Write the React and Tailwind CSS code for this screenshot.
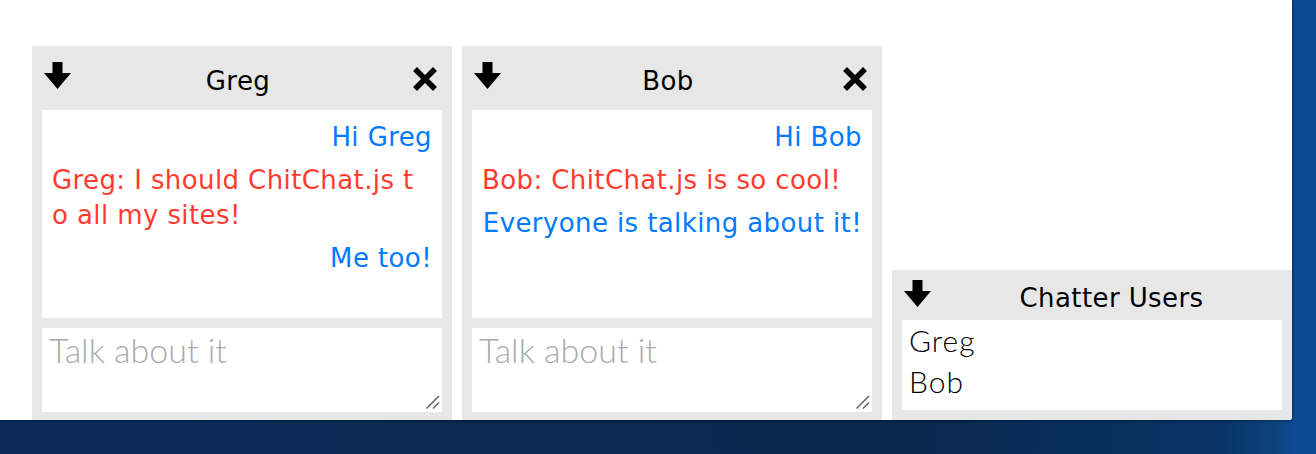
import React from "react";

const sans = { fontFamily: '"DejaVu Sans", Verdana, sans-serif' };
const thin = { fontFamily: 'Lato, "Open Sans", sans-serif' };

function DownArrow() {
  return (
    <svg width="27" height="27" viewBox="0 0 27 27" className="block shrink-0">
      <polygon points="8.5,0 18.5,0 18.5,11 27,11 13.5,27 0,11 8.5,11" fill="#000" />
    </svg>
  );
}

function CloseX() {
  return (
    <svg width="24" height="24" viewBox="0 0 24 24" className="block shrink-0">
      <path d="M4 4 L20 20 M20 4 L4 20" stroke="#000" strokeWidth="5.5" strokeLinecap="square" fill="none" />
    </svg>
  );
}

function Grip() {
  return (
    <svg width="16" height="16" viewBox="0 0 16 16" className="absolute right-[1px] bottom-[2px] pointer-events-none">
      <path d="M1.5 14.5 L14 2 M8 14.5 L14 8.5" stroke="#6b6b6b" strokeWidth="1.6" fill="none" />
    </svg>
  );
}

function ChatPanel({ name, messages }) {
  return (
    <div className="w-[420px] h-[374px] bg-[#e7e7e7] flex flex-col shrink-0">
      <div className="h-[64px] flex items-start pl-[12px] pr-[15px] shrink-0">
        <div className="mt-[16px]">
          <DownArrow />
        </div>
        <div
          className="flex-1 text-center text-[26px] leading-[30px] mt-[20px] pr-[8px] tracking-[0.4px] text-black"
          style={sans}
        >
          {name}
        </div>
        <div className="mt-[21px]">
          <CloseX />
        </div>
      </div>
      <div
        className="mx-[10px] h-[208px] bg-white px-[10px] pt-[10px] flex flex-col gap-[8px] shrink-0 tracking-[0.4px]"
        style={sans}
      >
        {messages.map((m, i) => (
          <div
            key={i}
            className={
              "text-[26px] leading-[35px] break-all " +
              (m.mine ? "text-right text-[#007aff]" : "text-left text-[#ff3b30] max-w-[368px]")
            }
          >
            {m.text}
          </div>
        ))}
      </div>
      <div className="relative mx-[10px] mt-[10px] h-[84px] bg-white shrink-0 flex">
        <textarea
          placeholder="Talk about it"
          className="w-full h-full resize-none bg-white border-0 outline-none pl-[7px] pt-[2px] text-[34px] font-light leading-[40px] text-black placeholder:text-[#aaaaaa]"
          style={thin}
        />
        <Grip />
      </div>
    </div>
  );
}

function UsersPanel({ users }) {
  return (
    <div className="w-[400px] h-[150px] bg-[#e7e7e7] flex flex-col shrink-0">
      <div className="h-[50px] flex items-start pl-[12px] shrink-0">
        <div className="mt-[10px]">
          <DownArrow />
        </div>
        <div
          className="flex-1 text-center text-[26px] leading-[30px] mt-[13px] tracking-[0.4px] text-black"
          style={sans}
        >
          Chatter Users
        </div>
      </div>
      <div
        className="mx-[10px] h-[90px] bg-white pl-[7px] text-[30px] font-light leading-[41px] tracking-[1px] text-black"
        style={thin}
      >
        {users.map((u) => (
          <div key={u}>{u}</div>
        ))}
      </div>
    </div>
  );
}

export default function App() {
  return (
    <div className="w-[1316px] h-[454px] overflow-hidden bg-[linear-gradient(90deg,#0a2b57_0%,#08284f_70%,#0a3466_93%,#0c447f_97%,#0d4a90_98.2%,#0e4c92_100%)]">
      <div className="w-[1292px] h-[420px] bg-white overflow-hidden flex items-end gap-[10px] pl-[32px] rounded-br-[3px] shadow-[1px_1px_3px_rgba(0,0,0,0.35)]">
        <ChatPanel
          name="Greg"
          messages={[
            { text: "Hi Greg", mine: true },
            { text: "Greg: I should ChitChat.js to all my sites!", mine: false },
            { text: "Me too!", mine: true },
          ]}
        />
        <ChatPanel
          name="Bob"
          messages={[
            { text: "Hi Bob", mine: true },
            { text: "Bob: ChitChat.js is so cool!", mine: false },
            { text: "Everyone is talking about it!", mine: true },
          ]}
        />
        <UsersPanel users={["Greg", "Bob"]} />
      </div>
    </div>
  );
}
